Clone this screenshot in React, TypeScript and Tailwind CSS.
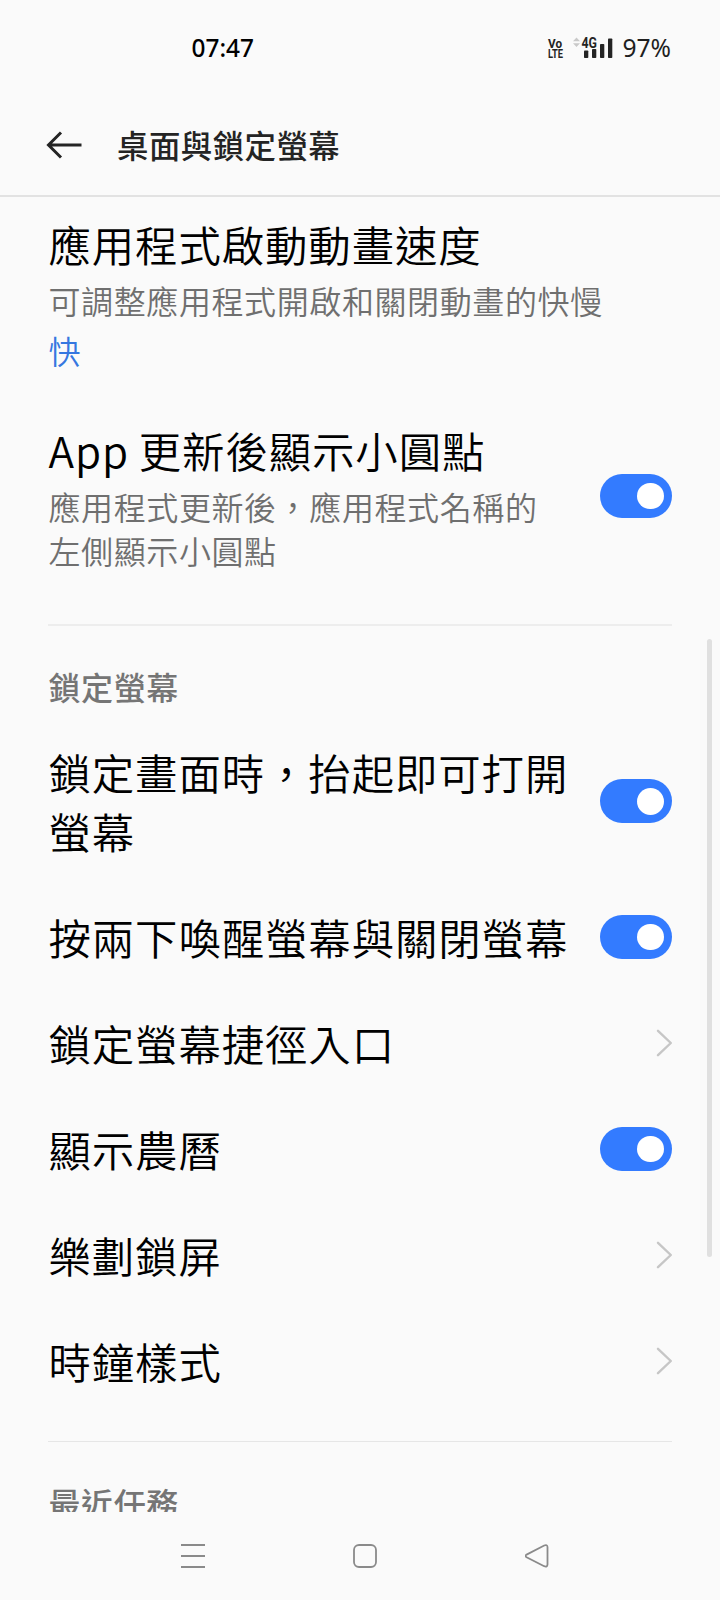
import { useState } from 'react';
import type { ReactNode } from 'react';

const titleCls =
  'text-[42.4px] leading-[59.5px] font-[350] tracking-[0.92px] text-black whitespace-pre-line [word-spacing:-0.5px]';
const summaryCls =
  'text-[32px] leading-[44.4px] font-[350] tracking-[0.6px] text-[#6f6f6f] whitespace-pre-line';
const headingCls = 'text-[32px] leading-[44px] font-medium tracking-[0.6px] text-[#757575]';

type SettingItem = {
  id: string;
  title: string;
  kind: 'switch' | 'link';
};

const lockItems: SettingItem[] = [
  { id: 'raise', title: '鎖定畫面時，抬起即可打開\n螢幕', kind: 'switch' },
  { id: 'double-tap', title: '按兩下喚醒螢幕與關閉螢幕', kind: 'switch' },
  { id: 'shortcuts', title: '鎖定螢幕捷徑入口', kind: 'link' },
  { id: 'lunar', title: '顯示農曆', kind: 'switch' },
  { id: 'magazine', title: '樂劃鎖屏', kind: 'link' },
  { id: 'clock', title: '時鐘樣式', kind: 'link' },
];

function Toggle() {
  const [on, setOn] = useState(true);
  return (
    <button
      type="button"
      role="switch"
      aria-checked={on}
      onClick={() => setOn(!on)}
      className={`flex h-11 w-[72px] shrink-0 items-center rounded-full px-[8.5px] ${
        on ? 'justify-end bg-[#337bff]' : 'justify-start bg-[#d9d9d9]'
      }`}
    >
      <span className="size-[26.5px] rounded-full bg-white" />
    </button>
  );
}

function Chevron() {
  return (
    <svg className="h-7 w-4 shrink-0" viewBox="0 0 16 28" fill="none" stroke="#c6c6c6" strokeWidth="2.4" strokeLinecap="round" strokeLinejoin="round">
      <path d="M2 1.8 14.8 14 2 26.2" />
    </svg>
  );
}

function Row({ title, children }: { title: string; children: ReactNode }) {
  return (
    <div className="flex items-center justify-between py-[23.25px]">
      <h3 className={`pl-[0.5px] ${titleCls}`}>{title}</h3>
      {children}
    </div>
  );
}

function StatusBar() {
  return (
    <div className="flex h-24 items-center justify-between pr-[49px] pb-px pl-[191.5px] font-['Noto_Sans',sans-serif] text-[#1f1f1f]">
      <span className="text-[24.4px] leading-8 font-medium text-black">07:47</span>
      <div className="flex items-center">
        <svg className="mr-[10px] h-[22px] w-[15px] overflow-visible font-['Roboto',sans-serif] text-[13px] font-bold" viewBox="0 0 15 22" fill="#242424">
          <text x="0" y="10.5" textLength="14" lengthAdjust="spacingAndGlyphs">
            Vo
          </text>
          <text x="0" y="21" textLength="15" lengthAdjust="spacingAndGlyphs">
            LTE
          </text>
        </svg>
        <svg className="mr-[2px] h-[22px] w-[41px] overflow-visible" viewBox="0 0 41 22" fill="#242424">
          <path d="M0 4.2 3.5.5 7 4.2ZM0 6.2h7L3.5 9.9Z" fill="#c9c9c9" />
          <text x="8.5" y="10.8" className="font-['Roboto',sans-serif] text-[14px] font-bold" textLength="15.5" lengthAdjust="spacingAndGlyphs">
            4G
          </text>
          <rect x="11" y="13.5" width="4.3" height="7.5" rx="0.8" />
          <rect x="19" y="12" width="4.3" height="9" rx="0.8" />
          <rect x="27" y="7" width="4.3" height="14" rx="0.8" />
          <rect x="35" y="1.5" width="4.3" height="19.5" rx="0.8" />
        </svg>
        <span className="ml-[6.5px] text-[24.6px] leading-8">97%</span>
      </div>
    </div>
  );
}

function NavBar() {
  return (
    <nav className="flex h-[88px] items-start justify-between pt-8 pr-[171px] pl-[181px]">
      <svg className="size-6" viewBox="0 0 24 24" stroke="#8a8a8a" strokeWidth="1.8">
        <path d="M0 1h24M0 12h24M0 23h24" />
      </svg>
      <svg className="size-6" viewBox="0 0 24 24" fill="none" stroke="#8a8a8a" strokeWidth="1.8">
        <rect x="1" y="1" width="22" height="22" rx="5" />
      </svg>
      <svg className="size-6" viewBox="0 0 24 24" fill="none" stroke="#8a8a8a" strokeWidth="1.8">
        <path d="M1.600 10.600 19.200 1.500Q22.300.3 22.500 3V20.500Q22.300 23.400 19.200 22.200L1.600 13.200Q-.4 11.900 1.600 10.600Z" />
      </svg>
    </nav>
  );
}

export default function App() {
  return (
    <div lang="zh-Hant" className="relative flex h-[1600px] w-[720px] flex-col bg-[#fafafa] font-['Noto_Sans_CJK_TC',sans-serif]">
      <StatusBar />

      <header className="flex h-[101px] shrink-0 items-center border-b-2 border-[#e2e2e2] pb-[2px] pl-[46px]">
        <svg className="h-7 w-9" viewBox="0 0 36 28" fill="none" stroke="#242424" strokeWidth="3">
          <path d="M35.500 14H2.500M15 1.500 2.500 14 15 26.500" />
        </svg>
        <h1 className="ml-[35px] text-[31.4px] leading-[44px] font-medium tracking-[0.5px] text-[#242424]">桌面與鎖定螢幕</h1>
      </header>

      <main className="h-[1315px] shrink-0 overflow-hidden px-12">
        <section className="pt-[17px]">
          <h3 className={`pl-[0.5px] ${titleCls}`}>應用程式啟動動畫速度</h3>
          <p className={`mt-1 pl-[0.5px] ${summaryCls}`}>可調整應用程式開啟和關閉動畫的快慢</p>
          <p className="mt-[6.5px] pl-[0.5px] text-[32px] leading-[44.4px] font-[350] text-[#3577e0]">快</p>
        </section>

        <section className="mt-[47px] flex items-center justify-between">
          <div className="pl-[0.5px]">
            <h3 className={titleCls}>App 更新後顯示小圓點</h3>
            <p className={`mt-[4.5px] ${summaryCls}`}>{'應用程式更新後，應用程式名稱的\n左側顯示小圓點'}</p>
          </div>
          <Toggle />
        </section>

        <section className="mt-[51px] border-t-2 border-[#ededed] pt-[38px]">
          <h2 className={`mb-[11px] pl-[0.5px] ${headingCls}`}>鎖定螢幕</h2>
          {lockItems.map((item) => (
            <Row key={item.id} title={item.title}>
              {item.kind === 'switch' ? <Toggle /> : <Chevron />}
            </Row>
          ))}
        </section>

        <section className="mt-[27px] border-t border-[#e6e6e6] pt-[38px]">
          <h2 className={`pl-[0.5px] ${headingCls}`}>最近任務</h2>
        </section>
      </main>

      <NavBar />

      {/* scroll indicator */}
      <div className="absolute top-[639px] right-2 h-[618px] w-[5px] rounded-full bg-[#e0e0e0]" />
    </div>
  );
}
